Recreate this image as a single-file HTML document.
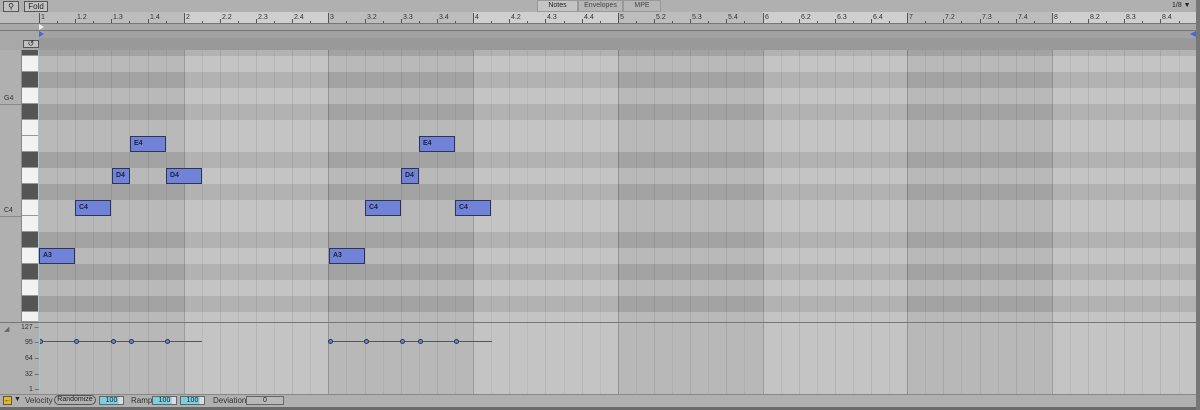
<!DOCTYPE html>
<html><head><style>
*{margin:0;padding:0;box-sizing:border-box}
body{width:1200px;height:410px;background:#b0b0b0;font-family:"Liberation Sans",sans-serif;font-size:8px;color:#222;position:relative;overflow:hidden}
.a{position:absolute}
.btn{position:absolute;border:1px solid #555;background:#c2c2c2;font-size:8px;text-align:center;line-height:9px;height:11px}
.row{position:absolute;left:0;width:1157px;height:16px}
.w{background:#b9b9b9}
.b{background:#a3a3a3}
.note{position:absolute;height:16px;background:#7183d8;border:1px solid #2e3550;font-size:7px;font-weight:bold;padding:3px 0 0 3px;color:#1e2236}
.lbl{position:absolute;font-size:7px;color:#333}
.key{position:absolute;left:22px;width:17px;height:16px;border-bottom:1px solid #999}
.kw{background:#f2f2f2}.kb{background:#555}
.dot{position:absolute;width:5px;height:5px;border-radius:50%;background:#7183d8;border:1px solid #2e3550}
.field{position:absolute;top:396px;height:9px;border:1px solid #666;font-size:7px;text-align:center;line-height:7px}
</style></head><body>
<div class="a" style="left:0;top:0;width:1200px;height:12px;background:#b0b0b0"></div>
<div class="btn" style="left:3px;top:1px;width:16px">&#9906;</div>
<div class="btn" style="left:24px;top:1px;width:24px">Fold</div>
<div class="a" style="left:537px;top:0;width:41px;height:12px;background:#c4c4c4;border:1px solid #999;font-size:7px;text-align:center;line-height:10px">Notes</div>
<div class="a" style="left:578px;top:0;width:45px;height:12px;background:#b6b6b6;border:1px solid #999;font-size:7px;text-align:center;line-height:10px;color:#444">Envelopes</div>
<div class="a" style="left:623px;top:0;width:38px;height:12px;background:#b6b6b6;border:1px solid #999;font-size:7px;text-align:center;line-height:10px;color:#444">MPE</div>
<div class="a" style="left:1172px;top:2px;font-size:7px">1/8 &#9660;</div>
<div class="a" style="left:0;top:12px;width:1197px;height:12px;background:#bdbdbd"></div>
<div id="ruler"></div>
<div class="a" style="left:0;top:23px;width:1197px;height:1px;background:#777"></div>
<div class="a" style="left:0;top:24px;width:1197px;height:6px;background:#a8a8a8"></div>
<div class="a" style="left:0;top:30px;width:1197px;height:1px;background:#777"></div>
<div class="a" style="left:39px;top:31px;width:1158px;height:7px;background:#a2a2a2"></div>
<div class="a" style="left:39px;top:38px;width:1158px;height:12px;background:#999"></div>
<div class="a" style="left:0;top:31px;width:39px;height:19px;background:#a8a8a8"></div>
<div class="btn" style="left:23px;top:40px;width:16px;height:8px;line-height:6px">&#8634;</div>
<div class="a" style="left:39px;top:24px;width:0;height:0;border-top:3px solid transparent;border-bottom:3px solid transparent;border-left:5px solid #eee"></div>
<div class="a" style="left:39px;top:31px;width:0;height:0;border-top:3px solid transparent;border-bottom:3px solid transparent;border-left:5px solid #4a66d8"></div>
<div class="a" style="left:1190px;top:31px;width:0;height:0;border-top:3px solid transparent;border-bottom:3px solid transparent;border-right:6px solid #4a66d8"></div>
<div class="a" style="left:0;top:50px;width:22px;height:273px;background:#b0b0b0;border-right:1px solid #888"></div>
<div class="a" style="left:0;top:104px;width:22px;height:1px;background:#888"></div>
<div class="a" style="left:0;top:216px;width:22px;height:1px;background:#888"></div>
<div class="lbl" style="left:4px;top:95px">G4</div>
<div class="lbl" style="left:4px;top:207px">C4</div>
<div id="keys"></div>
<div class="a" id="grid" style="left:39px;top:50px;width:1157px;height:273px;overflow:hidden"></div>
<div class="a" style="left:0;top:322px;width:1197px;height:1px;background:#777"></div>
<div class="a" style="left:0;top:323px;width:39px;height:71px;background:#b0b0b0"></div>
<div class="a" id="vel" style="left:39px;top:323px;width:1157px;height:71px;overflow:hidden"></div>
<div class="lbl" style="left:21px;top:324px">127 –</div>
<div class="lbl" style="left:25px;top:339px">95 –</div>
<div class="lbl" style="left:25px;top:355px">64 –</div>
<div class="lbl" style="left:25px;top:371px">32 –</div>
<div class="lbl" style="left:29px;top:386px">1 –</div>
<div class="lbl" style="left:4px;top:325px;color:#666">&#9698;</div>
<div class="a" style="left:39px;top:323px;width:1px;height:71px;background:#9cc"></div>
<div class="a" style="left:0;top:394px;width:1200px;height:13px;background:#b0b0b0;border-top:1px solid #888"></div>
<div class="a" style="left:3px;top:396px;width:9px;height:9px;background:#e8b820;border:1px solid #555;font-size:7px;line-height:7px;text-align:center">&#8592;</div>
<div class="a" style="left:14px;top:396px;font-size:7px">&#9660;</div>
<div class="a" style="left:25px;top:396px;font-size:8px;color:#333">Velocity</div>
<div class="a" style="left:54px;top:395px;width:42px;height:10px;border:1px solid #555;border-radius:5px;font-size:7px;text-align:center;line-height:8px">Randomize</div>
<div class="field" style="left:99px;width:25px;background:linear-gradient(90deg,#7bcfe0 80%,#ddd 80%)">100</div>
<div class="a" style="left:131px;top:396px;font-size:8px;color:#333">Ramp</div>
<div class="field" style="left:152px;width:25px;background:linear-gradient(90deg,#7bcfe0 80%,#ddd 80%)">100</div>
<div class="field" style="left:180px;width:25px;background:linear-gradient(90deg,#7bcfe0 80%,#ddd 80%)">100</div>
<div class="a" style="left:213px;top:396px;font-size:8px;color:#333">Deviation</div>
<div class="field" style="left:246px;width:38px;background:#b8b8b8">0</div>
<div class="a" style="left:0;top:407px;width:1200px;height:3px;background:#6a6a6a"></div>
<div class="a" style="left:1196px;top:0;width:4px;height:410px;background:#777"></div>
<script>
(function(){
var X0=39,BW=144.7;
var g=document.getElementById('grid'),h='';
var types=['b','w','b','w','b','w','w','b','w','b','w','w','b','w','b','w','b','w'];
for(var i=0;i<types.length;i++){h+='<div class="row '+types[i]+'" style="top:'+(i*16-10)+'px"></div>';}
for(var b=1;b<8;b+=2){h+='<div class="a" style="left:'+(b*BW)+'px;top:0;width:'+BW+'px;height:273px;background:rgba(255,255,255,0.17)"></div>';}
for(var k=1;k<64;k++){var x=k*BW/8;var c=k%8==0?'rgba(0,0,0,0.2)':(k%2==0?'rgba(0,0,0,0.08)':'rgba(0,0,0,0.05)');
h+='<div class="a" style="left:'+Math.round(x)+'px;top:0;width:1px;height:273px;background:'+c+'"></div>';}
var notes=[['A3',0,248,36],['C4',36,200,36],['D4',73,168,18],['E4',91,136,36],['D4',127,168,36],
['A3',290,248,36],['C4',326,200,36],['D4',362,168,18],['E4',380,136,36],['C4',416,200,36]];
notes.forEach(function(n){h+='<div class="note" style="left:'+n[1]+'px;top:'+(n[2]-50)+'px;width:'+n[3]+'px">'+n[0]+'</div>';});
g.innerHTML=h;
var v=document.getElementById('vel'),vh='<div class="a" style="left:0;top:0;width:1157px;height:71px;background:#b8b8b8"></div>';
for(var b=1;b<8;b+=2){vh+='<div class="a" style="left:'+(b*BW)+'px;top:0;width:'+BW+'px;height:71px;background:rgba(255,255,255,0.17)"></div>';}
for(var k=1;k<64;k++){var x=k*BW/8;var c=k%8==0?'rgba(0,0,0,0.2)':(k%2==0?'rgba(0,0,0,0.08)':'rgba(0,0,0,0.05)');
vh+='<div class="a" style="left:'+Math.round(x)+'px;top:0;width:1px;height:71px;background:'+c+'"></div>';}
vh+='<div class="a" style="left:0;top:18px;width:163px;height:1px;background:#555"></div>';
vh+='<div class="a" style="left:290px;top:18px;width:163px;height:1px;background:#555"></div>';
[0,36,73,91,127,290,326,362,380,416].forEach(function(x){vh+='<div class="dot" style="left:'+(x-1)+'px;top:16px"></div>';});
v.innerHTML=vh;
var r='';
for(var b=1;b<8;b+=2){r+='<div class="a" style="left:'+(X0+b*BW)+'px;top:12px;width:'+BW+'px;height:11px;background:#cfcfcf"></div>';}
for(var k=0;k<64;k++){var x=Math.round(X0+k*BW/8);
if(k%2==0){r+='<div class="a" style="left:'+x+'px;top:'+(k%8==0?13:19)+'px;width:1px;height:'+(k%8==0?10:4)+'px;background:#555"></div>';}
else r+='<div class="a" style="left:'+x+'px;top:21px;width:1px;height:2px;background:#555"></div>';
if(k%2==0){var bar=Math.floor(k/8)+1,bt=(k%8)/2+1;var t=bt==1?''+bar:bar+'.'+bt;
r+='<div class="a" style="left:'+(x+2)+'px;top:14px;font-size:7px;color:#333">'+t+'</div>';}}
document.getElementById('ruler').innerHTML=r;
var kk='',kt=['kb','kw','kb','kw','kb','kw','kw','kb','kw','kb','kw','kw','kb','kw','kb','kw','kb','kw'];
for(var i=0;i<kt.length;i++){var ty=50+i*16-10,hh=16;if(ty<50){hh-=50-ty;ty=50;}if(ty+hh>322)hh=322-ty;
kk+='<div class="key '+kt[i]+'" style="top:'+ty+'px;height:'+hh+'px"></div>';}
kk+='<div class="a" style="left:38px;top:50px;width:1px;height:273px;background:#9cc"></div>';
document.getElementById('keys').innerHTML=kk;
})();
</script>
</body></html>
